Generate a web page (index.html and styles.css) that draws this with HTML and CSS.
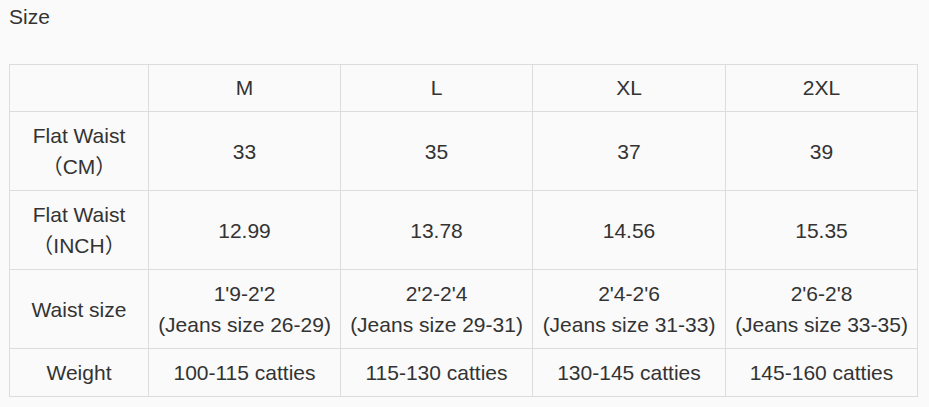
FILE: index.html
```html
<!DOCTYPE html>
<html lang="en">
<head>
<meta charset="utf-8">
<title>Size</title>
<link rel="stylesheet" href="styles.css">
</head>
<body>
<div class="page">
  <div class="title">Size</div>
  <table class="size-table">
    <colgroup>
      <col class="c-label">
      <col class="c-size">
      <col class="c-size">
      <col class="c-size-wide">
      <col class="c-size">
    </colgroup>
    <tr class="head">
      <td></td><td>M</td><td>L</td><td>XL</td><td>2XL</td>
    </tr>
    <tr>
      <td>Flat Waist<br>（CM）</td><td>33</td><td>35</td><td>37</td><td>39</td>
    </tr>
    <tr>
      <td>Flat Waist<br>（INCH）</td><td>12.99</td><td>13.78</td><td>14.56</td><td>15.35</td>
    </tr>
    <tr>
      <td>Waist size</td>
      <td>1'9-2'2<br>(Jeans size 26-29)</td>
      <td>2'2-2'4<br>(Jeans size 29-31)</td>
      <td>2'4-2'6<br>(Jeans size 31-33)</td>
      <td>2'6-2'8<br>(Jeans size 33-35)</td>
    </tr>
    <tr>
      <td>Weight</td>
      <td>100-115 catties</td><td>115-130 catties</td><td>130-145 catties</td><td>145-160 catties</td>
    </tr>
  </table>
</div>
</body>
</html>
```

FILE: styles.css
```css
html, body {
  margin: 0;
  padding: 0;
  background: #fafafa;
}
body {
  font-family: "Liberation Sans", "Noto Sans CJK SC", Arial, sans-serif;
  font-size: 21px;
  color: #333333;
}
.page {
  padding: 1px 0 0 9px;
}
.title {
  line-height: 31px;
  height: 31px;
  margin-bottom: 32px;
}
.size-table {
  border-collapse: collapse;
  table-layout: fixed;
  width: 908px;
}
.c-label { width: 139px; }
.c-size { width: 192px; }
.c-size-wide { width: 193px; }
.size-table td {
  border: 1px solid #dddddd;
  text-align: center;
  vertical-align: middle;
  line-height: 31px;
  padding: 8px 0;
}
.size-table tr.head td {
  padding: 7px 0 8px;
}
```
